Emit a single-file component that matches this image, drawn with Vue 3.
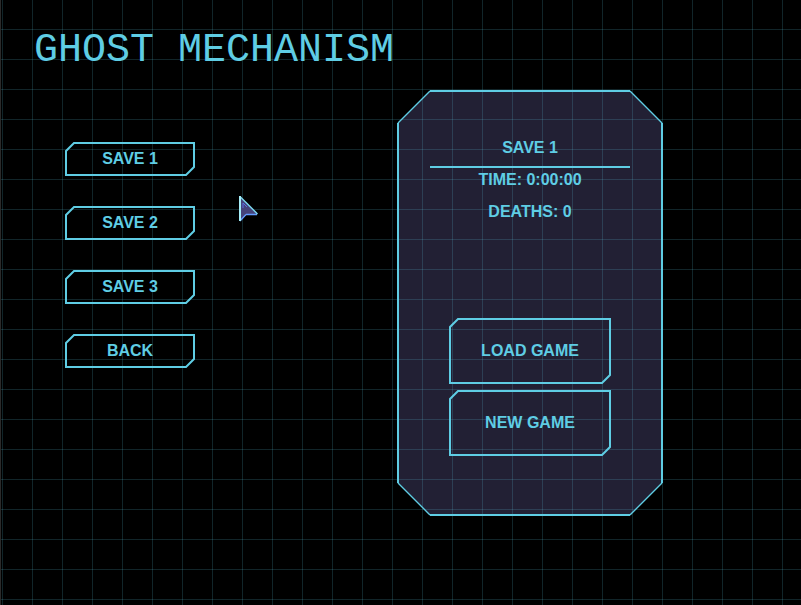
<script setup>
import { ref, computed } from 'vue'

const saves = [
  { name: 'SAVE 1', time: '0:00:00', deaths: 0 },
  { name: 'SAVE 2', time: '0:00:00', deaths: 0 },
  { name: 'SAVE 3', time: '0:00:00', deaths: 0 },
]
const selected = ref(0)
const current = computed(() => saves[selected.value])
const actions = ['LOAD GAME', 'NEW GAME']
</script>

<template>
  <main class="screen">
    <h1 class="title">GHOST MECHANISM</h1>
    <div class="content">
      <nav class="menu">
        <button
          v-for="(save, i) in saves"
          :key="save.name"
          type="button"
          class="btn"
          @click="selected = i"
        >
          <svg class="frame" viewBox="0 0 130 34" aria-hidden="true">
            <path d="M9 1H129V25L121 33H1V9Z" />
          </svg>
          <span class="label">{{ save.name }}</span>
        </button>
        <button type="button" class="btn">
          <svg class="frame" viewBox="0 0 130 34" aria-hidden="true">
            <path d="M9 1H129V25L121 33H1V9Z" />
          </svg>
          <span class="label">BACK</span>
        </button>
      </nav>

      <section class="panel">
        <svg class="frame" viewBox="0 0 266 426" preserveAspectRatio="none" aria-hidden="true">
          <path class="fill" d="M33 1H233L265 33V393L233 425H33L1 393V33Z" />
          <path d="M33 1H233M265 33V393M233 425H33M1 393V33" />
          <path class="thin" d="M233 1L265 33M265 393L233 425M33 425L1 393M1 33L33 1" />
        </svg>
        <h2 class="heading">{{ current.name }}</h2>
        <div class="stats">
          <p>TIME: {{ current.time }}</p>
          <p>DEATHS: {{ current.deaths }}</p>
        </div>
        <div class="actions">
          <button v-for="action in actions" :key="action" type="button" class="btn large">
            <svg class="frame" viewBox="0 0 162 66" aria-hidden="true">
              <path d="M9 1H161V57L153 65H1V9Z" />
            </svg>
            <span class="label">{{ action }}</span>
          </button>
        </div>
      </section>
    </div>

    <svg class="pointer" viewBox="0 0 20 28" aria-hidden="true">
      <path d="M1 2L18 19H8L1 26Z" fill="#45437a" />
      <path d="M7 19.5H18M7 19.5L1 26" stroke="#639bff" stroke-width="1.3" fill="none" />
      <path d="M4 13V8L8 12" stroke="#5b6ee1" stroke-width="1" fill="none" />
      <path d="M1 1.5L18.5 19" stroke="#7fdcf5" stroke-width="1.3" fill="none" />
      <path d="M1 1V26" stroke="#a5edf8" stroke-width="2" fill="none" />
    </svg>
  </main>
</template>

<style>
body {
  margin: 0;
  background: #000;
}
</style>

<style scoped>
.screen {
  position: relative;
  box-sizing: border-box;
  min-height: 100vh;
  padding-top: 27px;
  border-left: 1px solid #2b2b2b;
  color: #5fcde4;
  font-family: "Liberation Sans", Arial, sans-serif;
  font-size: 16px;
  font-weight: 700;
  background: #000;
}

/* Translucent grid laid over the whole screen, panel included */
.screen::after {
  content: "";
  position: absolute;
  inset: 0;
  pointer-events: none;
  background-image:
    linear-gradient(to right, rgb(95 205 228 / 0.18) 1px, transparent 1px),
    linear-gradient(to bottom, rgb(95 205 228 / 0.18) 1px, transparent 1px);
  background-size: 30px 30px;
  background-position: 1px 29px;
}

.title {
  margin: 0 0 0 33px;
  font-family: "Courier New", "Liberation Mono", monospace;
  font-size: 40px;
  font-weight: 400;
  line-height: 48px;
}

.content {
  display: flex;
  justify-content: space-between;
  align-items: flex-start;
  padding: 15px 138px 0 64px;
}

.menu {
  display: flex;
  flex-direction: column;
  gap: 30px;
  padding-top: 52px;
}

.btn {
  position: relative;
  width: 130px;
  height: 34px;
  padding: 0;
  border: 0;
  background: none;
  color: inherit;
  font: inherit;
  line-height: 20px;
}

.btn.large {
  width: 162px;
  height: 66px;
}

.frame {
  position: absolute;
  inset: 0;
  width: 100%;
  height: 100%;
  fill: none;
  stroke: #5fcde4;
  stroke-width: 2;
}

.frame .fill {
  fill: #222034;
  stroke: none;
}

.frame .thin {
  stroke-width: 1.4;
}

.label,
.heading,
.stats {
  position: relative;
}

.panel {
  position: relative;
  box-sizing: border-box;
  width: 266px;
  padding: 42px 33px 60px;
  text-align: center;
}

.heading {
  margin: 0;
  padding-bottom: 2px;
  border-bottom: 2px solid #5fcde4;
  font-size: 16px;
  line-height: 32px;
}

.stats {
  display: flex;
  flex-direction: column;
  gap: 8px;
  line-height: 24px;
}

.stats p {
  margin: 0;
}

.actions {
  display: flex;
  flex-direction: column;
  align-items: center;
  gap: 6px;
  padding-top: 94px;
}

.pointer {
  position: absolute;
  z-index: 1;
  left: 238px;
  top: 195px;
  width: 20px;
  height: 28px;
  pointer-events: none;
}
</style>
